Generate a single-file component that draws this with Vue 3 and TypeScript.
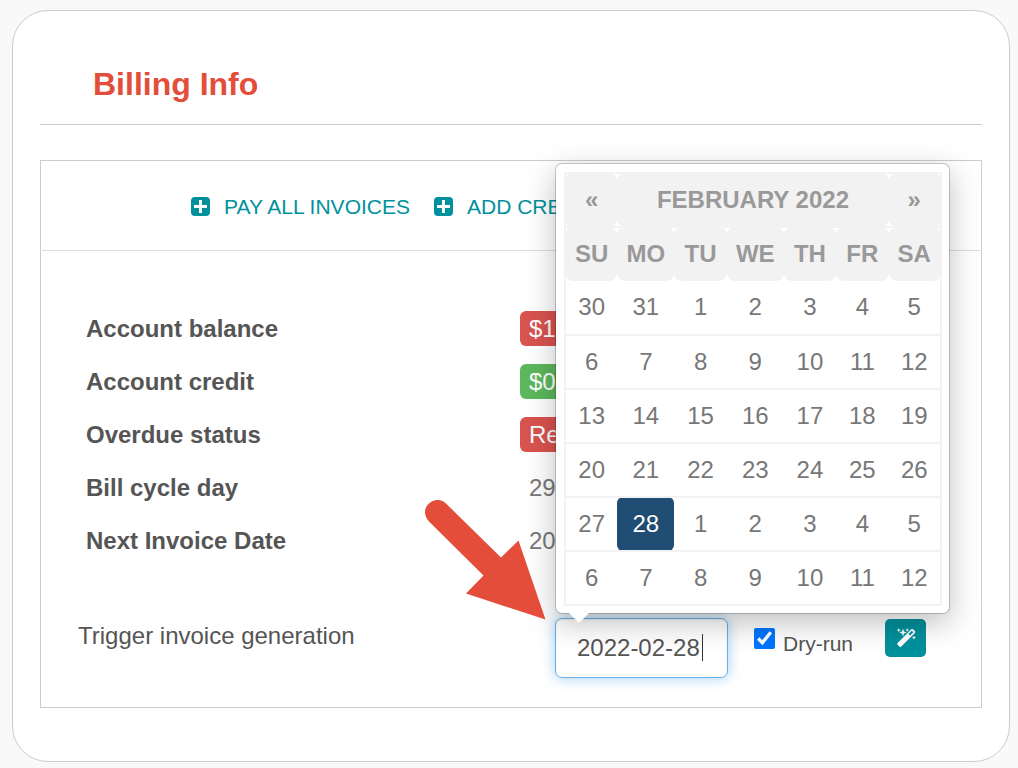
<script setup lang="ts">
import { ref } from 'vue'

interface Detail {
  label: string
  value: string
  tone: 'danger' | 'success' | 'plain'
}

const actions: string[] = ['Pay all invoices', 'Add credit']

const details: Detail[] = [
  { label: 'Account balance', value: '$1.00', tone: 'danger' },
  { label: 'Account credit', value: '$0.00', tone: 'success' },
  { label: 'Overdue status', value: 'Red', tone: 'danger' },
  { label: 'Bill cycle day', value: '29', tone: 'plain' },
  { label: 'Next Invoice Date', value: '2022', tone: 'plain' },
]

const weekdays: string[] = ['Su', 'Mo', 'Tu', 'We', 'Th', 'Fr', 'Sa']

const firstShown = new Date(2022, 0, 30)
const weeks = Array.from({ length: 6 }, (_, week) =>
  Array.from({ length: 7 }, (_, day) => {
    const date = new Date(firstShown)
    date.setDate(firstShown.getDate() + week * 7 + day)
    return { day: date.getDate(), active: date.getMonth() === 1 && date.getDate() === 28 }
  }),
)

const invoiceDate = ref('2022-02-28')
const dryRun = ref(true)
</script>

<template>
  <main class="card">
    <header class="card-header">
      <h1>Billing Info</h1>
    </header>

    <section class="panel">
      <nav class="actions">
        <a v-for="action in actions" :key="action" href="#" class="action">
          <svg class="plus" viewBox="0 0 19 19" aria-hidden="true">
            <path
              fill-rule="evenodd"
              d="M4 0h11a4 4 0 0 1 4 4v11a4 4 0 0 1-4 4H4a4 4 0 0 1-4-4V4a4 4 0 0 1 4-4ZM8 3v5H3v3h5v5h3v-5h5V8h-5V3Z"
            />
          </svg>
          {{ action }}
        </a>
      </nav>

      <dl class="details">
        <div v-for="item in details" :key="item.label" class="detail">
          <dt>{{ item.label }}</dt>
          <dd><span class="value" :class="item.tone">{{ item.value }}</span></dd>
        </div>
      </dl>

      <form class="trigger" @submit.prevent>
        <label class="trigger-label" for="invoice-date">Trigger invoice generation</label>
        <div class="date-field">
          <input id="invoice-date" v-model="invoiceDate" class="date-input" type="text" />
          <span class="text-cursor"></span>
          <div class="picker">
            <table class="calendar">
              <colgroup>
                <col /><col class="wide" /><col /><col class="wide" /><col /><col /><col />
              </colgroup>
              <thead>
                <tr>
                  <th><button type="button" class="nav" aria-label="Previous month">«</button></th>
                  <th colspan="5">February 2022</th>
                  <th><button type="button" class="nav" aria-label="Next month">»</button></th>
                </tr>
                <tr>
                  <th v-for="name in weekdays" :key="name">{{ name }}</th>
                </tr>
              </thead>
              <tbody>
                <tr v-for="(week, w) in weeks" :key="w">
                  <td v-for="(cell, d) in week" :key="d" :class="{ active: cell.active }">{{ cell.day }}</td>
                </tr>
              </tbody>
            </table>
          </div>
          <svg class="pointer" viewBox="0 0 121 120" aria-hidden="true">
            <path d="M22 4.500 76 57.500 93.500 40.500 120.500 119.500 41 93.500 58.500 75.500 4 21.500C-1 16-1.500 9 3.500 4 9-1.500 17-1 22 4.500Z" />
          </svg>
        </div>
        <label class="dry-run">
          <input v-model="dryRun" type="checkbox" />
          <span>Dry-run</span>
        </label>
        <button type="submit" class="run" aria-label="Generate invoice">
          <svg viewBox="0 0 20 20" aria-hidden="true">
            <path
              fill-rule="evenodd"
              d="M1.400 15.200 15.200 1.200q1-.9 1.900 0l1.800 1.800q.9.900 0 1.900L5 18.800q-.7.600-1.400 0l-2.200-2.200q-.6-.7 0-1.400ZM12.600 6l1.500 1.500 3.200-3.200-1.500-1.500Z"
            />
            <path d="M7 .6 8 3.500 10.800 4.500 8 5.500 7 8.400 6 5.500 3.200 4.500 6 3.500ZM2.800.1l.6 1.500 1.500.6-1.500.6-.6 1.500-.6-1.500L.7 2.200l1.500-.6ZM11.200 0l.6 1.400 1.400.6-1.400.6-.6 1.400-.6-1.400L9.200 2l1.400-.6ZM18 7.600l.6 1.500 1.400.6-1.400.6-.6 1.500-.6-1.500-1.400-.6 1.400-.6Z" />
          </svg>
        </button>
      </form>
    </section>
  </main>
</template>

<style>
body {
  background: #f9f9f9;
}
</style>

<style scoped>
.card {
  margin: 10px 8px 6px 12px;
  padding: 0 27px 53px;
  border: 1px solid #ccc;
  border-radius: 36px;
  background: #fff;
  color: #555;
  font-family: "Liberation Sans", Arial, sans-serif;
  font-size: 24px;
  line-height: 35px;
}

.card-header {
  padding: 53px 53px 20px;
  border-bottom: 1px solid #ccc;
}

h1 {
  margin: 0;
  color: #e44d3a;
  font-size: 32px;
  line-height: 40px;
}

.panel {
  margin-top: 35px;
  padding-bottom: 29px;
  border: 1px solid #ccc;
}

.actions {
  display: flex;
  align-items: center;
  gap: 24px;
  box-sizing: border-box;
  height: 90px;
  margin: 0 1px;
  padding: 2px 0 0 149px;
  border-bottom: 1px solid #ddd;
}

.action {
  display: flex;
  align-items: center;
  gap: 14px;
  color: #00919c;
  font-size: 21px;
  text-decoration: none;
  text-transform: uppercase;
}

.plus {
  width: 19px;
  height: 19px;
  fill: currentColor;
}

.details {
  margin: 0;
  padding: 51px 0 0 45px;
}

.detail {
  display: grid;
  grid-template-columns: minmax(0, 1fr) 461px;
  align-items: center;
  height: 53px;
}

dt {
  font-weight: bold;
}

dd {
  display: flex;
  margin: 0;
  color: #777;
}

.value {
  padding: 0 9px;
  border-radius: 6px;
}

.value.danger {
  background: #d9534f;
  color: #fff;
}

.value.success {
  background: #5cb85c;
  color: #fff;
}

.trigger {
  display: flex;
  align-items: flex-start;
  padding: 51px 55px 0 37px;
}

.trigger-label {
  flex: 1;
}

.date-field {
  position: relative;
  width: 173px;
}

.date-input {
  display: block;
  box-sizing: border-box;
  width: 100%;
  height: 60px;
  padding: 0 21px;
  border: 1px solid #66afe9;
  border-radius: 7px;
  outline: none;
  background: #fff;
  box-shadow: inset 0 1px 2px rgba(0, 0, 0, 0.08), 0 0 14px rgba(102, 175, 233, 0.6);
  color: #555;
  font: inherit;
}

.text-cursor {
  position: absolute;
  top: 16px;
  left: 147px;
  width: 1px;
  height: 27px;
  background: #333;
}

.picker {
  position: absolute;
  bottom: calc(100% + 4px);
  left: 0;
  z-index: 2;
  padding: 8px 7px 7px 8px;
  border: 1px solid rgba(0, 0, 0, 0.2);
  border-radius: 7px;
  background: #fff;
  background-clip: padding-box;
  box-shadow: 0 9px 30px rgba(0, 0, 0, 0.25);
}

.picker::after {
  position: absolute;
  top: 100%;
  left: 13px;
  border: 10px solid transparent;
  border-bottom: 0;
  border-top-color: #fff;
  content: "";
}

.calendar {
  width: 378px;
  border: 2px solid #f2f2f2;
  border-collapse: collapse;
  table-layout: fixed;
}

.wide {
  width: 57px;
}

.calendar tr {
  height: 54px;
}

.calendar tr + tr {
  border-top: 2px solid #f2f2f2;
}

.calendar th,
.calendar td {
  padding: 0 0 2px;
  border-radius: 8px;
  text-align: center;
}

.calendar th {
  background: #f2f2f2;
  color: #999;
  text-transform: uppercase;
}

.calendar td {
  color: #777;
}

.calendar td.active {
  border-radius: 6px;
  background: #204d74;
  color: #fff;
  text-shadow: 0 -1px 0 rgba(0, 0, 0, 0.25);
}

.nav {
  padding: 0;
  border: 0;
  background: none;
  color: inherit;
  font: inherit;
}

.pointer {
  position: absolute;
  top: -118px;
  left: -130px;
  z-index: 3;
  width: 121px;
  height: 120px;
  fill: #e44d3a;
}

.dry-run {
  display: flex;
  gap: 8px;
  margin-left: 26px;
  font-size: 21px;
}

.dry-run input {
  width: 21px;
  height: 21px;
  margin: 10px 0 0;
  accent-color: #0075ff;
}

.dry-run span {
  padding-top: 8px;
}

.run {
  display: flex;
  align-items: center;
  justify-content: center;
  width: 41px;
  height: 38px;
  margin: 1px 0 0 32px;
  padding: 0;
  border: 0;
  border-radius: 5px;
  background: #00919c;
}

.run svg {
  width: 20px;
  height: 20px;
  fill: #fff;
}
</style>
